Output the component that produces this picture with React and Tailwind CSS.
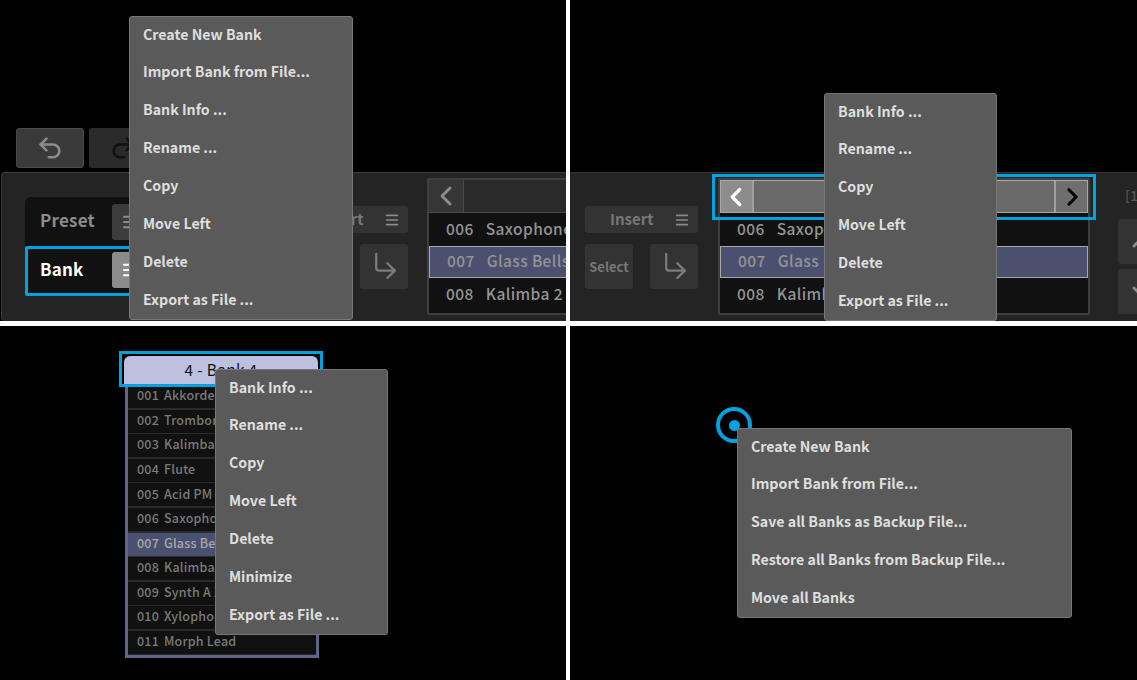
import { Undo2, Redo2, Menu, ChevronLeft, ChevronRight, ChevronUp, ChevronDown } from 'lucide-react';

const fullMenu = ['Create New Bank', 'Import Bank from File...', 'Bank Info ...', 'Rename ...', 'Copy', 'Move Left', 'Delete', 'Export as File ...'];
const shortMenu = ['Bank Info ...', 'Rename ...', 'Copy', 'Move Left', 'Delete', 'Export as File ...'];
const listMenu = ['Bank Info ...', 'Rename ...', 'Copy', 'Move Left', 'Delete', 'Minimize', 'Export as File ...'];
const bgMenu = ['Create New Bank', 'Import Bank from File...', 'Save all Banks as Backup File...', 'Restore all Banks from Backup File...', 'Move all Banks'];

const presets = ['Akkorde', 'Trombone', 'Kalimba', 'Flute', 'Acid PM', 'Saxophone', 'Glass Bells', 'Kalimba 2', 'Synth A X', 'Xylophone', 'Morph Lead'];

function ContextMenu({ items, className }) {
    return (
        <div className={`absolute z-20 overflow-hidden rounded-[3px] border border-[#777] bg-[#5a5a5a] ${className}`}>
            {items.map((item) => (
                <div key={item} className="flex h-[37.9px] items-center pb-[3.4px] pl-[13px] text-[14.2px] font-semibold whitespace-nowrap text-[#dedede]">
                    {item}
                </div>
            ))}
        </div>
    );
}

function ReturnArrow() {
    return (
        <svg width="23" height="26" viewBox="0 0 24 28" fill="none" stroke="#7c7c7c" strokeWidth="2.4" strokeLinecap="round" strokeLinejoin="round">
            <path d="M2 1v15a3 3 0 0 0 3 3h17" />
            <path d="M14 11l8 8-8 8" />
        </svg>
    );
}

function InsertColumn() {
    return (
        <div className="flex w-[113px] shrink-0 flex-col pt-[33px]">
            <div className="flex h-[27px] items-center rounded-[3px] bg-[#333] pr-[8px] pl-[25px] text-[15px] font-semibold text-[#777]">
                Insert
                <Menu className="ml-auto h-[16px] w-[16px] text-[#8a8a8a]" strokeWidth={2.6} />
            </div>
            <div className="mt-[11px] flex justify-between">
                <div className="flex h-[45px] w-[48px] items-center justify-center rounded-[3px] bg-[#333] text-[13px] font-semibold text-[#777]">
                    Select
                </div>
                <div className="flex h-[45px] w-[48px] items-center justify-center rounded-[3px] bg-[#333] pb-[2px] pl-[3px]">
                    <ReturnArrow />
                </div>
            </div>
        </div>
    );
}

function ListRows() {
    const rows = [['006', 'Saxophone'], ['007', 'Glass Bells'], ['008', 'Kalimba 2']];
    return rows.map(([num, name]) => (
        <div
            key={num}
            className={`flex h-[32.6px] items-center pb-[2px] whitespace-nowrap text-[15.5px] font-medium tracking-[0.4px] text-[#949494] ${num === '007' ? 'border border-[#a8a8a8] bg-[#4b5070]' : ''}`}
        >
            <span className="mr-[12px] ml-[17px]">{num}</span>
            <span>{name}</span>
        </div>
    ));
}

function Panel1() {
    return (
        <div className="relative h-[321px] overflow-hidden bg-black pt-[128px]">
            <div className="flex gap-[5px] pl-[16px]">
                <div className="flex h-[40px] w-[68px] items-center justify-center rounded-[3px] border border-[#4a4a4a] bg-[#3a3a3a]">
                    <Undo2 className="h-[28px] w-[28px] text-[#8c8c8c]" strokeWidth={2.2} />
                </div>
                <div className="flex h-[40px] w-[68px] items-center justify-center rounded-[3px] bg-[#2a2a2a]">
                    <Redo2 className="h-[28px] w-[28px] text-[#111]" strokeWidth={2.2} />
                </div>
            </div>
            <div className="mt-[4px] ml-px flex h-[149px] rounded-l-[4px] border-t border-l border-[#3c3c3c] bg-[#242424]">
                <div className="mt-[24px] ml-[23px] h-[98px] w-[150px] shrink-0">
                    <div className="flex h-[49px] items-center rounded-t-[6px] bg-[#111] pl-[15px] text-[17px] font-semibold tracking-[0.2px] text-[#8c8c8c]">
                        <span className="mb-[3px]">Preset</span>
                        <div className="mr-[27px] ml-auto flex h-[36px] w-[36px] items-center justify-center rounded-[3px] bg-[#3c3c3c]">
                            <Menu className="h-[18px] w-[18px] text-[#8c8c8c]" strokeWidth={2.6} />
                        </div>
                    </div>
                    <div className="flex h-[50px] items-center rounded-[2px] border-[3px] border-[#00a2e0] bg-[#111] pb-[2px] pl-[12px] text-[17px] font-semibold tracking-[0.2px] text-white">
                        <span className="mb-[2px]">Bank</span>
                        <div className="mr-[24px] ml-auto flex h-[36px] w-[36px] items-center justify-center rounded-[3px] bg-[#8c8c8c]">
                            <Menu className="h-[18px] w-[18px] text-white" strokeWidth={2.6} />
                        </div>
                    </div>
                </div>
                <div className="ml-[120px]">
                    <InsertColumn />
                </div>
                <div className="mt-[5px] ml-[19px] h-[137px] w-[200px] shrink-0 rounded-[2px] border-2 border-[#3f3f3f] bg-[#111]">
                    <div className="flex h-[33px] bg-[#2a2a2a]">
                        <div className="flex w-[35px] items-center justify-center border-r border-b border-[#4a4a4a] bg-[#363636] pr-[1px]">
                            <ChevronLeft className="h-[32px] w-[32px] text-[#8c8c8c]" strokeWidth={2.2} />
                        </div>
                        <div className="flex-1 border-b border-[#4a4a4a]" />
                    </div>
                    <ListRows />
                </div>
            </div>
            <ContextMenu items={fullMenu} className="top-[16px] left-[129px] h-[304px] w-[224px]" />
        </div>
    );
}

function Panel2() {
    return (
        <div className="relative h-[321px] overflow-hidden bg-black pt-[172px]">
            <div className="flex h-[149px] border-t border-[#333] bg-[#242424] pl-[15px]">
                <InsertColumn />
                <div className="relative mt-[5px] ml-[20px] h-[137px] w-[372px] shrink-0 rounded-[2px] border-2 border-[#3f3f3f] bg-[#111]">
                    <div className="flex h-[33px] border border-[#a8a8a8] bg-[#6a6a6a]">
                        <div className="flex w-[33px] items-center justify-center border-r-2 border-[#a0a0a0] bg-[#8c8c8c] pr-[1px]">
                            <ChevronLeft className="h-[32px] w-[32px] text-white" strokeWidth={2.6} />
                        </div>
                        <div className="flex-1" />
                        <div className="flex w-[33px] items-center justify-center border-l-2 border-[#a0a0a0] bg-[#6e6e6e] pl-[2px]">
                            <ChevronRight className="h-[32px] w-[32px] text-black" strokeWidth={2.6} />
                        </div>
                    </div>
                    <ListRows />
                    <div className="absolute -top-[6px] -right-[8px] -left-[8px] h-[46px] border-[3px] border-[#00a2e0]" />
                </div>
                <div className="ml-[28px] flex flex-col">
                    <div className="mt-[12px] h-[34px] pl-[7px] text-[14px] font-medium text-[#555]">[1</div>
                    <div className="flex h-[45px] w-[48px] items-center justify-center rounded-[3px] bg-[#333]">
                        <ChevronUp className="h-[32px] w-[32px] text-[#8c8c8c]" strokeWidth={2.2} />
                    </div>
                    <div className="mt-[5px] flex h-[45px] w-[48px] items-center justify-center rounded-[3px] bg-[#333]">
                        <ChevronDown className="h-[32px] w-[32px] text-[#8c8c8c]" strokeWidth={2.2} />
                    </div>
                </div>
            </div>
            <ContextMenu items={shortMenu} className="top-[93px] left-[254px] h-[228px] w-[173px]" />
        </div>
    );
}

function Panel3() {
    return (
        <div className="relative h-[354px] overflow-hidden bg-black pt-[25px] pl-[119px]">
            <div className="relative w-[204px]">
                <div className="mx-[5px] mt-[5px] flex h-[29px] items-center justify-center rounded-t-[6px] bg-[#bcc1e0] pb-[2px] text-[15.5px] tracking-[0.3px] text-[#111]">
                    4 - Bank 4
                </div>
                <div className="absolute -top-[5px] left-0 h-[36px] w-[204px] border-[3px] border-[#00a2e0]" />
                <div className="mx-[6px] h-[273px] w-[194px] border-[3px] border-t-0 border-[#5f6688] bg-[#2a2a2a]">
                    {presets.map((name, i) => (
                        <div
                            key={name}
                            className={`mb-[1.6px] flex h-[23px] items-center pb-[2px] whitespace-nowrap pl-[9px] text-[12.5px] font-medium tracking-[0.2px] text-[#7a7a7a] ${i === 6 ? 'bg-[#4b5070] text-[#a8a8a8]' : 'bg-[#111]'}`}
                        >
                            <span className="mr-[5px]">{String(i + 1).padStart(3, '0')}</span>
                            <span>{name}</span>
                        </div>
                    ))}
                </div>
            </div>
            <ContextMenu items={listMenu} className="top-[43px] left-[215px] h-[266px] w-[173px]" />
        </div>
    );
}

function Panel4() {
    return (
        <div className="relative h-[354px] overflow-hidden bg-black">
            <div className="absolute top-[81px] left-[146px] flex h-[36px] w-[36px] items-center justify-center rounded-full border-[4px] border-[#00a2e0]">
                <div className="h-[11px] w-[11px] rounded-full bg-[#00a2e0]" />
            </div>
            <ContextMenu items={bgMenu} className="top-[102px] left-[167px] h-[190px] w-[335px]" />
        </div>
    );
}

export default function App() {
    return (
        <div className="grid h-[680px] w-[1137px] grid-cols-[566px_567px] grid-rows-[321px_354px] gap-x-[4px] gap-y-[5px] bg-white font-['Noto_Sans_CJK_JP','Noto_Sans',sans-serif]">
            <Panel1 />
            <Panel2 />
            <Panel3 />
            <Panel4 />
        </div>
    );
}
